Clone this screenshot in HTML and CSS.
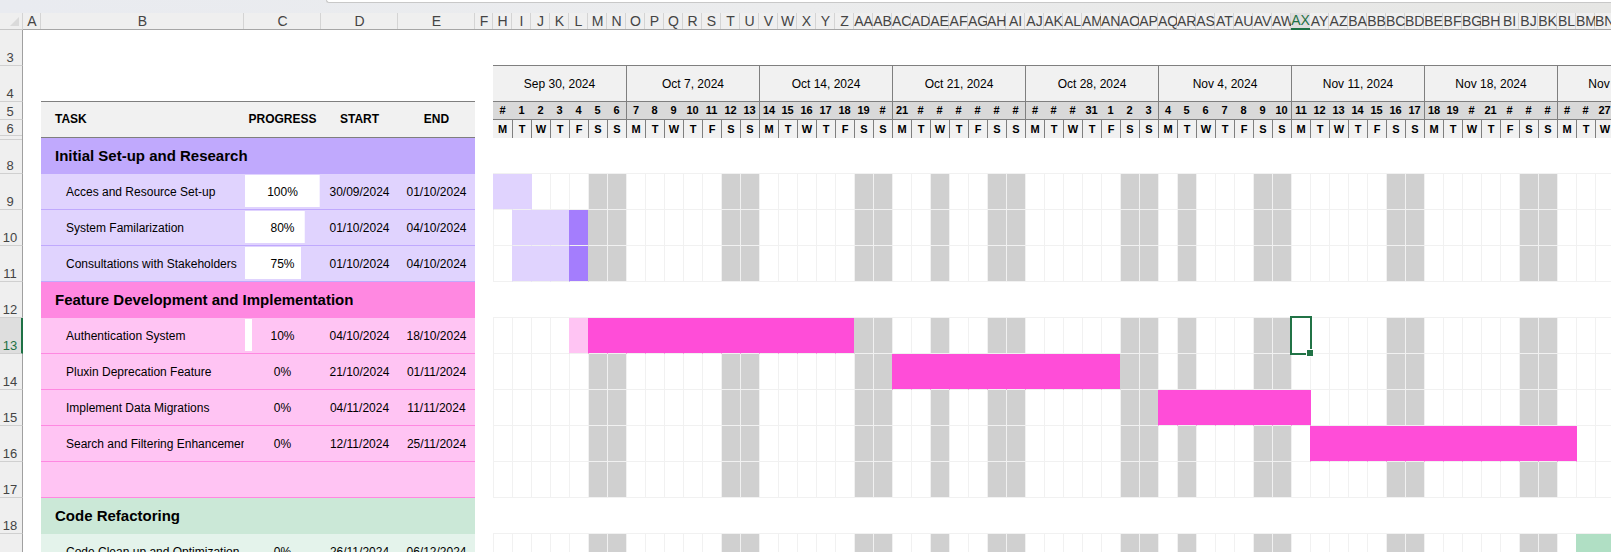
FILE: index.html
```html
<!DOCTYPE html>
<html lang="en">
<head>
<meta charset="utf-8">
<title>Project schedule</title>
<link rel="stylesheet" href="styles.css">
</head>
<body>
<div class="app">
  <div class="toolbar"><div class="formula-edge"></div></div>
  <table class="sheet" id="sheet"></table>
</div>
<script src="sheet.js"></script>
</body>
</html>
```

FILE: styles.css
```css
* { box-sizing: border-box; }

body {
  margin: 0;
  background: #fff;
  font-family: "Liberation Sans", Arial, sans-serif;
  font-size: 12px;
  color: #000;
}

.app {
  height: 100vh;
  overflow: hidden;
}

.toolbar {
  height: 13px;
  padding-left: 326px;
  background: linear-gradient(90deg, #e9ebf0, #ebeced 50%, #e6e6e4);
}

.formula-edge {
  height: 3px;
  background: #fff;
  border: 1px solid #c8c8c8;
  border-width: 0 0 1px 1px;
  border-bottom-left-radius: 4px;
}

.sheet {
  width: 100%;
  table-layout: fixed;
  border-collapse: separate;
  border-spacing: 0;
}

.sheet th,
.sheet td {
  padding: 0;
  overflow: hidden;
  white-space: nowrap;
  text-align: center;
  vertical-align: middle;
  font-weight: normal;
  line-height: 14px;
}

.col-num { width: 23px; }
.col-gap { width: 18px; }
.col-task { width: 203px; }
.col-data { width: 77px; }
.col-day { width: 19px; }

.row-letters { height: 17px; }
.row-tall { height: 36px; }
.row-short { height: 18px; }

/* Column letters and row numbers */
.sheet .letter {
  background: linear-gradient(#d4d4d4, #d4d4d4) right / 1px 100% no-repeat, #efefef;
  border-bottom: 1px solid #a6a6a6;
  color: #444;
  font-size: 14px;
  line-height: 16px;
}

.sheet .letter.active {
  background: #dedede;
  border-bottom: 2px solid #1e7145;
  color: #1e7145;
  line-height: 15px;
}

.sheet .corner {
  background: linear-gradient(#d4d4d4, #d4d4d4) right / 1px 100% no-repeat, #efefef;
  border-bottom: 1px solid #c6c6c6;
}

.corner svg {
  display: block;
  margin-left: 10px;
}

.sheet .number {
  height: inherit;
  padding-right: 2px;
  background: #efefef;
  border-right: 1px solid #a0a0a0;
  border-bottom: 1px solid #d0d0d0;
  color: #444;
  font-size: 13px;
  line-height: 15px;
  vertical-align: bottom;
}

.sheet .number.before-hidden {
  background: linear-gradient(#d0d0d0, #d0d0d0) 0 15px / 100% 1px no-repeat, #efefef;
  border-bottom: 0;
  padding-bottom: 2px;
}

.sheet .number.after-hidden {
  background: linear-gradient(#d0d0d0, #d0d0d0) 0 1px / 100% 1px no-repeat, #efefef;
}

.sheet .number.active {
  padding-right: 1px;
  background: #dedede;
  border-right: 2px solid #1e7145;
  color: #1e7145;
}

/* Task list */
.sheet .rule { border-bottom: 1px solid #7f7f7f; }

.sheet .head {
  padding-bottom: 2px;
  background: #f1f1f1;
  border-bottom: 1px solid #7f7f7f;
  font-weight: bold;
}

.sheet .head.task,
.sheet .phase {
  padding-left: 14px;
  text-align: left;
}

.sheet .phase {
  background: var(--strong);
  font-size: 15px;
  font-weight: bold;
  line-height: 18px;
}

.sheet .item {
  background-color: var(--soft);
  border-bottom: 1px solid var(--strong);
}

.sheet .item.name {
  padding-left: 25px;
  text-align: left;
}

.sheet .item.progress {
  background-image: linear-gradient(#fff, #fff);
  background-position: 1px 1px;
  background-repeat: no-repeat;
}

.purple { --strong: #c0a9fd; --soft: #e0d3fe; --bar: #a47dfd; }
.pink { --strong: #ff88e1; --soft: #ffc4f3; --bar: #ff4dd8; }
.green { --strong: #cbe8d7; --soft: #e4f3eb; --bar: #b0dfc4; }

/* Calendar header */
.sheet .week {
  background: #f1f1f1;
  border-bottom: 1px solid #7f7f7f;
  border-left: 1px solid #7f7f7f;
}

.sheet .date,
.sheet .weekday {
  font-size: 11px;
  font-weight: bold;
  line-height: 14px;
}

.sheet .date {
  padding-bottom: 1px;
  background: #d9d9d9;
  border-bottom: 1px solid #7f7f7f;
}

.sheet .date.monday { border-left: 1px solid #7f7f7f; }

.sheet .weekday {
  background: #f1f1f1;
  border-left: 1px solid #7f7f7f;
}

.sheet .week.first,
.sheet .date.first,
.sheet .weekday.first { border-left: 0; }

/* Calendar grid */
.sheet .blank { border-bottom: 1px solid #f1f1f1; }

.sheet .day {
  border-bottom: 1px solid #f1f1f1;
  border-left: 1px solid #f1f1f1;
}

.sheet .day.off { background: #d0d0d0; }
.sheet .day.done { background: var(--soft); border-left-color: var(--soft); }
.sheet .day.todo { background: var(--bar); border-left-color: var(--bar); }
.sheet .day.after-done { border-left-color: var(--soft); }
.sheet .day.after-todo { border-left-color: var(--bar); }
.sheet .day.off.after-done,
.sheet .day.off.after-todo { border-left-color: #d0d0d0; }

.sheet .day.done,
.sheet .day.todo { border-bottom-color: #f1f1f1; }

.sheet .day.selected {
  position: relative;
  overflow: visible;
}

.cursor {
  position: absolute;
  inset: -2px;
  border: 2px solid #217346;
}

.handle {
  position: absolute;
  right: -4px;
  bottom: -4px;
  width: 8px;
  height: 8px;
  background: #217346;
  border: 1px solid #fff;
}
```

FILE: sheet.js
```js
const DAYS = 63;
const SELECTED_DAY = 42;
const HOLIDAYS = [23, 36];
const FIRST = Date.UTC(2024, 8, 30);
const WEEKS = ["Sep 30, 2024", "Oct 7, 2024", "Oct 14, 2024", "Oct 21, 2024", "Oct 28, 2024",
  "Nov 4, 2024", "Nov 11, 2024", "Nov 18, 2024", "Nov 25, 2024"];
const WIDE = [0, 20, 22, 23, 24, 25, 26, 27, 28, 29, 30, 51, 53, 54, 55, 56, 57, 59, 60, 61];

// [row, phase title] or [row, task, percent, start, end, first day, first open day, end day]
const PHASES = [
  { theme: "purple", row: 8, title: "Initial Set-up and Research", items: [
    [9, "Acces and Resource Set-up", 100, "30/09/2024", "01/10/2024", 0, 2, 2],
    [10, "System Familarization", 80, "01/10/2024", "04/10/2024", 1, 4, 5],
    [11, "Consultations with Stakeholders", 75, "01/10/2024", "04/10/2024", 1, 4, 5]] },
  { theme: "pink", row: 12, title: "Feature Development and Implementation", items: [
    [13, "Authentication System", 10, "04/10/2024", "18/10/2024", 4, 5, 19],
    [14, "Pluxin Deprecation Feature", 0, "21/10/2024", "01/11/2024", 21, 21, 33],
    [15, "Implement Data Migrations", 0, "04/11/2024", "11/11/2024", 35, 35, 43],
    [16, "Search and Filtering Enhancements", 0, "12/11/2024", "25/11/2024", 43, 43, 57],
    [17, "", null, "", "", -1, -1, -1]] },
  { theme: "green", row: 18, title: "Code Refactoring", items: [
    [19, "Code Clean up and Optimization", 0, "26/11/2024", "06/12/2024", 57, 57, 68]] }
];

const days = [...Array(DAYS).keys()];
const first = k => (k === 0 ? " first" : "");

function letter(n) {
  let s = "";
  for (; n > 0; n = Math.floor((n - 1) / 26)) s = String.fromCharCode(65 + (n - 1) % 26) + s;
  return s;
}

function letterCell(n) {
  const active = n === SELECTED_DAY + 8 ? " active" : "";
  return `<th class="letter${active}">${letter(n)}</th>`;
}

function number(n, extra = "") {
  return `<th class="number ${extra}">${n}</th>`;
}

function state(item, k) {
  const [, , , , , start, open, end] = item;
  if (k < start || k >= end) return "";
  return k < open ? "done" : "todo";
}

function dayCell(item, k) {
  const names = ["day"];
  const own = state(item, k);
  const previous = state(item, k - 1);
  if (own) names.push(own);
  else {
    if (k % 7 > 4 || HOLIDAYS.includes(k)) names.push("off");
    if (previous) names.push("after-" + previous);
  }
  const selected = item[0] === 13 && k === SELECTED_DAY;
  if (selected) names.push("selected");
  const cursor = selected ? '<div class="cursor"></div><div class="handle"></div>' : "";
  return `<td class="${names.join(" ")}">${cursor}</td>`;
}

function itemRow(item, theme) {
  const [row, name, percent, start, end] = item;
  return `<tr class="row-tall ${theme}">${number(row, row === 13 ? "active" : "")}<td></td>
    <td class="item name">${name}</td>
    <td class="item progress" style="background-size:${(percent || 0) * 0.97}% 32px">${percent === null ? "" : percent + "%"}</td>
    <td class="item">${start}</td><td class="item">${end}</td><td></td>
    ${days.map(k => dayCell(item, k)).join("")}</tr>`;
}

const columns = `<colgroup><col class="col-num"><col class="col-gap"><col class="col-task">
  <col class="col-data"><col class="col-data"><col class="col-data"><col class="col-gap">
  ${'<col class="col-day">'.repeat(DAYS)}</colgroup>`;

const letters = `<tr class="row-letters"><th class="corner"><svg width="9" height="9" viewBox="0 0 9 9">
  <path d="M9 0V9H0Z" fill="#dadada"/></svg></th>
  ${[1, 2, 3, 4, 5, 6].map(letterCell).join("")}${days.map(k => letterCell(k + 8)).join("")}</tr>`;

const header = `
  <tr class="row-tall">${number(3)}<td colspan="6"></td><td class="rule" colspan="${DAYS}"></td></tr>
  <tr class="row-tall">${number(4)}<td></td><td class="rule" colspan="4"></td><td></td>
    ${WEEKS.map((w, i) => `<th class="week${first(i)}" colspan="7">${w}</th>`).join("")}</tr>
  <tr class="row-short">${number(5)}<td rowspan="2"></td><th class="head task" rowspan="2">TASK</th>
    <th class="head" rowspan="2">PROGRESS</th><th class="head" rowspan="2">START</th>
    <th class="head" rowspan="2">END</th><td rowspan="2"></td>
    ${days.map(k => {
      const date = new Date(FIRST + k * 864e5).getUTCDate();
      const monday = k % 7 === 0 ? " monday" : "";
      return `<th class="date${monday}${first(k)}">${WIDE.includes(k) ? "#" : date}</th>`;
    }).join("")}</tr>
  <tr class="row-short">${number(6, "before-hidden")}
    ${days.map(k => `<th class="weekday${first(k)}">${"MTWTFSS"[k % 7]}</th>`).join("")}</tr>`;

const body = PHASES.map(p => `<tr class="row-tall ${p.theme}">${number(p.row, p.row === 8 ? "after-hidden" : "")}
  <td></td><th class="phase" colspan="4">${p.title}</th><td></td><td class="blank" colspan="${DAYS}"></td></tr>
  ${p.items.map(item => itemRow(item, p.theme)).join("")}`).join("");

document.getElementById("sheet").innerHTML =
  `${columns}<thead>${letters}${header}</thead><tbody>${body}</tbody>`;
```
